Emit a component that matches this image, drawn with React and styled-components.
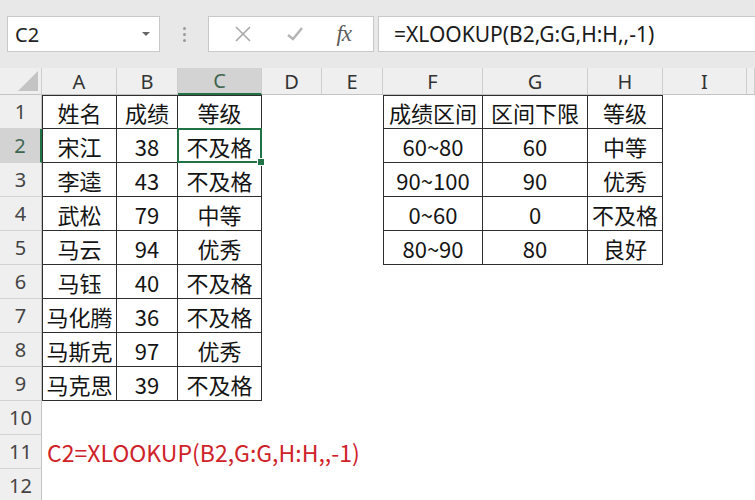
import React from 'react';
import styled, { createGlobalStyle, css } from 'styled-components';

const GlobalStyle = createGlobalStyle`
  html, body { margin: 0; padding: 0; background: #fff; overflow: hidden; }
  * { box-sizing: border-box; }
`;

const GREEN = '#217346';
const LINE = '#2e2e2e';
const COLS = [42, 75, 61, 84, 60, 61, 100, 105, 75, 84, 8];
const LETTERS = ['A', 'B', 'C', 'D', 'E', 'F', 'G', 'H', 'I', ''];

const Page = styled.div`
  width: 755px;
  height: 500px;
  display: flex;
  flex-direction: column;
  background: #fff;
`;

const Toolbar = styled.div`
  height: 68px;
  flex-shrink: 0;
  background: #e8e8e8;
  display: flex;
  align-items: flex-start;
  padding: 16px 0 0 7px;
`;

const Box = styled.div`
  height: 36px;
  background: #fff;
  border: 1px solid #c9c9c9;
  display: flex;
  align-items: center;
`;

const NameBox = styled(Box)`
  width: 153px;
  padding: 0 9px 0 7px;
  justify-content: space-between;
  font-family: "Noto Sans", sans-serif;
  font-size: 20px;
  color: #222;
`;

const Caret = styled.span`
  width: 0;
  height: 0;
  border-left: 4px solid transparent;
  border-right: 4px solid transparent;
  border-top: 4px solid #666;
`;

const Dots = styled.div`
  width: 48px;
  height: 36px;
  display: flex;
  flex-direction: column;
  align-items: center;
  justify-content: center;
  gap: 3px;
  span {
    width: 3px;
    height: 3px;
    border-radius: 50%;
    background: #9a9a9a;
  }
`;

const IconBox = styled(Box)`
  width: 166px;
  justify-content: space-around;
  padding: 0 6px 0 8px;
  margin-right: 4px;
`;

const Fx = styled.span`
  font-family: "Liberation Serif", serif;
  font-style: italic;
  font-size: 23px;
  color: #5c5c5c;
  letter-spacing: -1px;
`;

const FormulaInput = styled(Box)`
  flex: 1;
  padding-left: 15px;
  border-right: none;
  font-family: "Noto Sans", sans-serif;
  font-size: 21px;
  color: #1a1a1a;
`;

const Sheet = styled.div`
  flex: 1;
  display: grid;
  grid-template-columns: ${COLS.map((c, i) => (i === COLS.length - 1 ? '1fr' : `${c}px`)).join(' ')};
  grid-template-rows: 27px repeat(12, 1fr);
  background: #fff;
`;

const ColHead = styled.div`
  background: ${p => (p.$active ? '#d3d3d3' : '#efefef')};
  border-right: 1px solid #cdcdcd;
  border-bottom: ${p => (p.$active ? `2px solid ${GREEN}` : '1px solid #c3c3c3')};
  display: flex;
  align-items: center;
  justify-content: center;
  font-family: "Noto Sans", sans-serif;
  font-size: 20px;
  color: ${p => (p.$active ? '#3f6650' : '#333')};
  position: relative;
`;

const Corner = styled(ColHead)`
  &::after {
    content: '';
    position: absolute;
    right: 3px;
    bottom: 3px;
    border-left: 20px solid transparent;
    border-bottom: 20px solid #c4c4c4;
  }
`;

const RowHead = styled.div`
  background: ${p => (p.$active ? '#d3d3d3' : '#efefef')};
  border-bottom: 1px solid #d3d3d3;
  border-right: ${p => (p.$active ? `2px solid ${GREEN}` : '1px solid #c3c3c3')};
  display: flex;
  align-items: center;
  justify-content: center;
  font-family: "Noto Sans", sans-serif;
  font-size: 20px;
  color: ${p => (p.$active ? '#3f6650' : '#444')};
`;

const Cell = styled.div`
  position: relative;
  display: flex;
  align-items: center;
  justify-content: center;
  white-space: nowrap;
  font-family: "Noto Sans CJK SC", sans-serif;
  font-size: 22px;
  color: #141414;
  ${p => p.$boxed && css`
    background: #fff;
    border-right: 1px solid ${LINE};
    border-bottom: 1px solid ${LINE};
  `}
  ${p => p.$top && css`border-top: 1px solid ${LINE};`}
  ${p => p.$left && css`border-left: 1px solid ${LINE};`}
  ${p => p.$selected && css`
    &::after {
      content: '';
      position: absolute;
      inset: -1px -1px -1px -1px;
      border: 2px solid ${GREEN};
      z-index: 2;
    }
    &::before {
      content: '';
      position: absolute;
      right: -4px;
      bottom: -4px;
      width: 6px;
      height: 6px;
      background: ${GREEN};
      border: 1px solid #fff;
      z-index: 3;
    }
  `}
`;

const Note = styled(Cell)`
  justify-content: flex-start;
  padding-left: 5px;
  overflow: visible;
  font-size: 23px;
  color: #cf2229;
  z-index: 1;
`;

const students = [
  ['姓名', '成绩', '等级'],
  ['宋江', '38', '不及格'],
  ['李逵', '43', '不及格'],
  ['武松', '79', '中等'],
  ['马云', '94', '优秀'],
  ['马钰', '40', '不及格'],
  ['马化腾', '36', '不及格'],
  ['马斯克', '97', '优秀'],
  ['马克思', '39', '不及格'],
];

const ranges = [
  ['成绩区间', '区间下限', '等级'],
  ['60~80', '60', '中等'],
  ['90~100', '90', '优秀'],
  ['0~60', '0', '不及格'],
  ['80~90', '80', '良好'],
];

const XIcon = () => (
  <svg width="20" height="20" viewBox="0 0 20 20" fill="none" stroke="#a8a8a8" strokeWidth="1.6">
    <path d="M3 3 L17 17 M17 3 L3 17" />
  </svg>
);

const CheckIcon = () => (
  <svg width="20" height="20" viewBox="0 0 20 20" fill="none" stroke="#b4b4b4" strokeWidth="2.4">
    <path d="M3 11 L8 15 L17 4" />
  </svg>
);

function cellFor(row, col) {
  // col: 1=A ... 10=J
  if (row >= 1 && row <= 9 && col >= 1 && col <= 3) {
    return {
      text: students[row - 1][col - 1],
      boxed: true,
      top: row === 1,
      left: col === 1,
      selected: row === 2 && col === 3,
    };
  }
  if (row >= 1 && row <= 5 && col >= 6 && col <= 8) {
    return {
      text: ranges[row - 1][col - 6],
      boxed: true,
      top: row === 1,
      left: col === 6,
    };
  }
  return { text: '' };
}

export default function App() {
  const rows = Array.from({ length: 12 }, (_, i) => i + 1);
  return (
    <>
      <GlobalStyle />
      <Page>
        <Toolbar>
          <NameBox>
            C2
            <Caret />
          </NameBox>
          <Dots><span /><span /><span /></Dots>
          <IconBox>
            <XIcon />
            <CheckIcon />
            <Fx>fx</Fx>
          </IconBox>
          <FormulaInput>=XLOOKUP(B2,G:G,H:H,,-1)</FormulaInput>
        </Toolbar>
        <Sheet>
          <Corner />
          {LETTERS.map((l, i) => (
            <ColHead key={i} $active={l === 'C'}>{l}</ColHead>
          ))}
          {rows.map(r => (
            <React.Fragment key={r}>
              <RowHead $active={r === 2}>{r}</RowHead>
              {LETTERS.map((_, i) => {
                const col = i + 1;
                if (r === 11 && col === 1) {
                  return <Note key={col}>C2=XLOOKUP(B2,G:G,H:H,,-1)</Note>;
                }
                const c = cellFor(r, col);
                return (
                  <Cell
                    key={col}
                    $boxed={c.boxed}
                    $top={c.top}
                    $left={c.left}
                    $selected={c.selected}
                  >
                    {c.text}
                  </Cell>
                );
              })}
            </React.Fragment>
          ))}
        </Sheet>
      </Page>
    </>
  );
}
